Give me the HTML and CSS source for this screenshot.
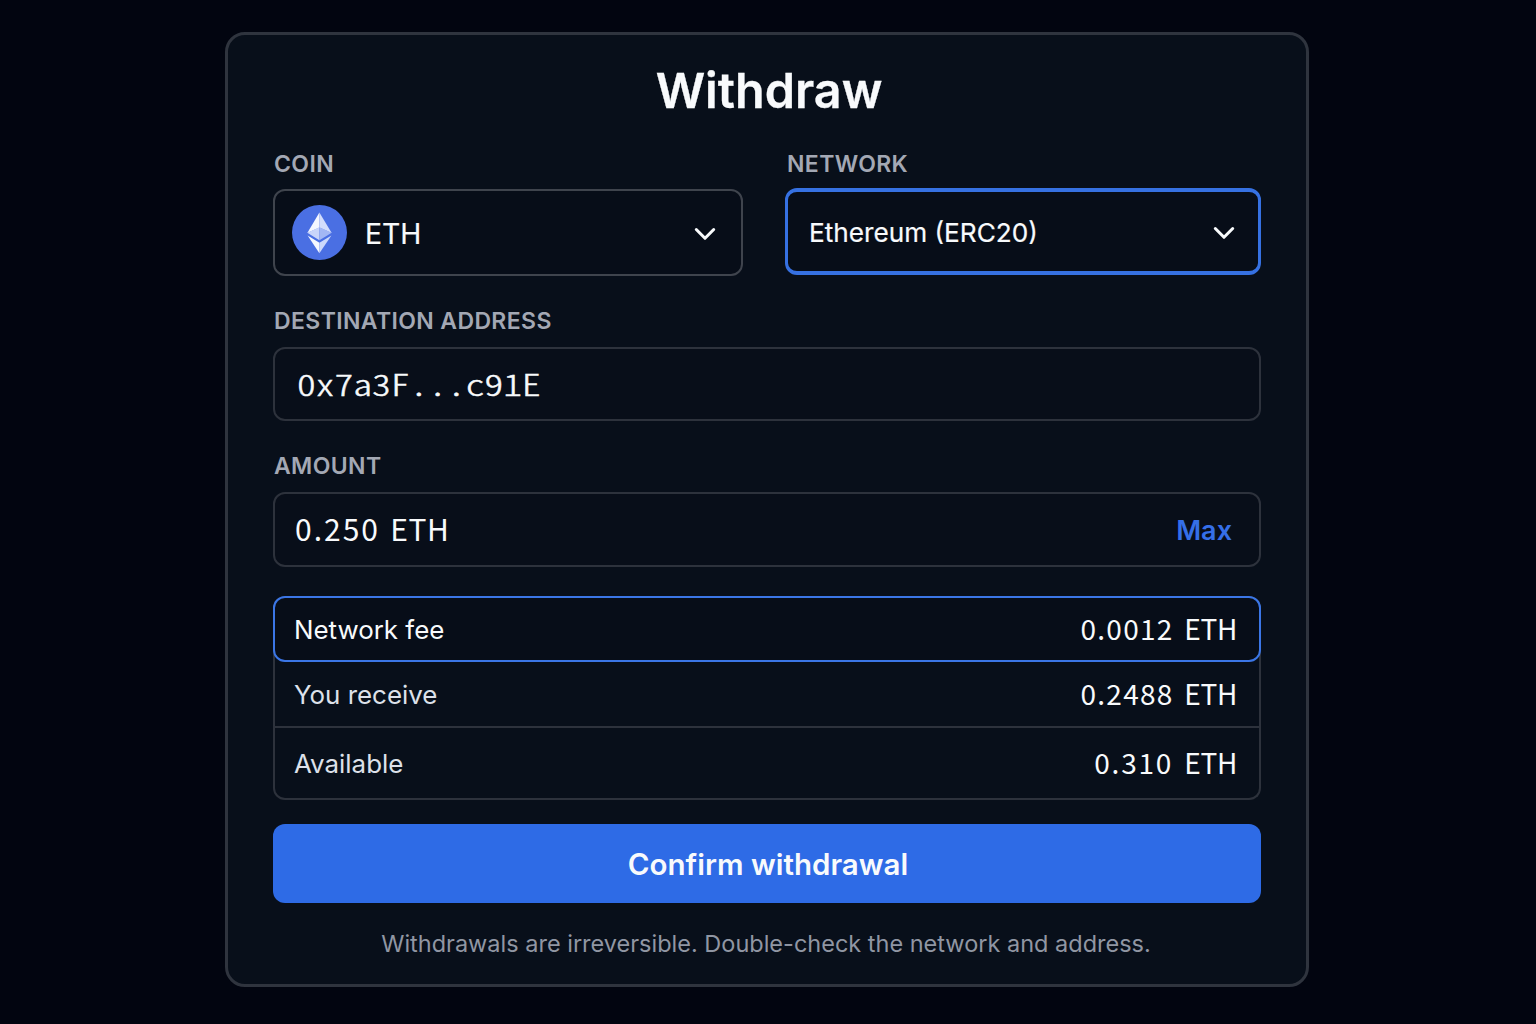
FILE: index.html
```html
<!DOCTYPE html>
<html lang="en">
<head>
<meta charset="utf-8">
<title>Withdraw</title>
<link rel="stylesheet" href="styles.css">
</head>
<body>
<main class="card">
  <h1 class="title">Withdraw</h1>
  <div class="selects">
    <div class="field">
      <div class="label">COIN</div>
      <div class="select coin">
        <svg class="eth" viewBox="0 0 55 55" width="55" height="55">
          <circle cx="27.5" cy="27.5" r="27.5" fill="#4a6fe3"/>
          <path d="M27.4 7.5 15.3 28 27.4 22.5Z" fill="#f4f7ff"/>
          <path d="M27.4 7.5 39.7 28 27.4 22.5Z" fill="#d3ddfc"/>
          <path d="M15.3 27.8 27.4 22.3V35.2Z" fill="#c9d5fa"/>
          <path d="M39.7 27.8 27.4 22.3V35.2Z" fill="#a3b7f4"/>
          <path d="M15.6 30.6 27.4 37.8V48.3Z" fill="#f4f7ff"/>
          <path d="M39.4 30.6 27.4 37.8V48.3Z" fill="#cdd9fc"/>
        </svg>
        <span class="coin-name">ETH</span>
        <svg class="chevron" viewBox="0 0 22 14" width="22" height="14"><path d="M2.3 2.5 11 11.3 19.7 2.5"/></svg>
      </div>
    </div>
    <div class="field">
      <div class="label network-label">NETWORK</div>
      <div class="select network">
        <span class="network-name">Ethereum (ERC20)</span>
        <svg class="chevron" viewBox="0 0 22 14" width="22" height="14"><path d="M2.3 2.5 11 11.3 19.7 2.5"/></svg>
      </div>
    </div>
  </div>
  <div class="label address-label">DESTINATION ADDRESS</div>
  <div class="input address"><span class="mono">0x7a3F...c91E</span></div>
  <div class="label amount-label">AMOUNT</div>
  <div class="input amount"><span class="num amount-value">0.250 <span class="unit">ETH</span></span><span class="max">Max</span></div>
  <div class="summary">
    <div class="row fee"><span class="name">Network fee</span><span class="num">0.0012 <span class="unit">ETH</span></span></div>
    <div class="row receive"><span class="name">You receive</span><span class="num">0.2488 <span class="unit">ETH</span></span></div>
    <div class="row available"><span class="name">Available</span><span class="num short">0.310 <span class="unit">ETH</span></span></div>
  </div>
  <button class="confirm">Confirm withdrawal</button>
  <p class="note">Withdrawals are irreversible. Double-check the network and address.</p>
</main>
</body>
</html>
```
FILE: styles.css
```css
* { box-sizing: border-box; }
body {
  margin: 0;
  height: 1024px;
  padding: 32px 0 0 225px;
  overflow: hidden;
  background: #020510;
  color: #f8fafc;
  font-family: Inter, sans-serif;
}
.card {
  width: 1084px;
  height: 955px;
  padding: 27px 45px 0;
  border: 3px solid #2f343e;
  border-radius: 20px;
  background: #080f1a;
}
.title {
  margin: 0 0 32px 4px;
  line-height: 58px;
  text-align: center;
  font-size: 48.5px;
  font-weight: 600;
  -webkit-text-stroke: 0.3px;
}
.selects {
  display: grid;
  grid-template-columns: 470px 476px;
  gap: 42px;
}
.label {
  line-height: 24px;
  margin-bottom: 13px;
  padding-left: 1px;
  color: #a3a8b4;
  font-size: 23px;
  font-weight: 600;
  letter-spacing: 0.38px;
}
.network-label { margin-bottom: 12px; padding-left: 2px; }
.select {
  display: flex;
  align-items: center;
  height: 87px;
  border-radius: 12px;
  background: #070d18;
}
.coin { padding: 0 25px 0 17px; border: 2px solid #3f444d; }
.network { padding: 0 23px 0 21px; border: 3px solid #3671e2; border-width: 4px 3px; }
.coin-name { margin-left: 18px; font-size: 28.3px; padding-top: 2px; -webkit-text-stroke: 0.2px; }
.network-name { font-size: 26.2px; padding-top: 1px; -webkit-text-stroke: 0.2px; }
.chevron { margin-left: auto; margin-top: 3px; fill: none; stroke: #f8fafc; stroke-width: 3; stroke-linecap: round; stroke-linejoin: round; }
.address-label { margin-top: 33px; margin-bottom: 14px; }
.amount-label { margin-top: 33px; margin-bottom: 14px; }
.input {
  display: flex;
  align-items: center;
  justify-content: space-between;
  border: 2px solid #2d323c;
  border-radius: 12px;
  background: #080e19;
}
.address { height: 74px; padding: 0 22px; }
.amount { height: 75px; padding: 0 27px 0 20px; }
.mono {
  padding-bottom: 3px;
  font-family: "Noto Sans CJK JP", sans-serif;
  font-size: 30px;
  font-weight: 300;
  -webkit-text-stroke: 0.5px;
  font-feature-settings: "hwid";
  transform: scaleX(1.25);
  transform-origin: left;
}
.num {
  padding-bottom: 3px;
  font-family: "Noto Sans CJK JP", sans-serif;
  font-size: 28px;
  line-height: 40px;
  letter-spacing: 1.3px;
  word-spacing: 3px;
}
.short { letter-spacing: 1.8px; }
.unit { letter-spacing: -0.3px; }
.amount-value { font-size: 30px; letter-spacing: 2px; }
.amount-value .unit { letter-spacing: 0.6px; margin-left: -1.5px; }
.max { color: #356fe8; font-size: 27px; font-weight: 600; padding-top: 1px; }
.summary {
  height: 204px;
  margin-top: 29px;
  border: 2px solid #2d323c;
  border-top: 0;
  border-radius: 12px;
}
.row {
  display: flex;
  align-items: center;
  justify-content: space-between;
  padding: 0 22px 0 19px;
  font-size: 25.9px;
}
.fee {
  height: 66px;
  margin: 0 -2px 1px;
  padding: 0 22px 0 19px;
  border: 2px solid #3b76e6;
  border-radius: 12px;
  background: #070d18;
}
.receive { height: 65px; border-bottom: 2px solid #2d323c; }
.available { height: 69px; padding-top: 2px; }
.receive .name, .available .name { color: #dde1ea; }
.confirm {
  display: block;
  width: 100%;
  height: 79px;
  margin-top: 24px;
  padding: 1px 0 0 2px;
  border: 0;
  border-radius: 12px;
  background: #2e6be6;
  color: #f8fafc;
  font: 600 29.5px Inter, sans-serif;
}
.note {
  margin: 29px 2px 0 0;
  line-height: 24px;
  text-align: center;
  color: #9096a3;
  font-size: 23.5px;
  white-space: nowrap;
}
```
